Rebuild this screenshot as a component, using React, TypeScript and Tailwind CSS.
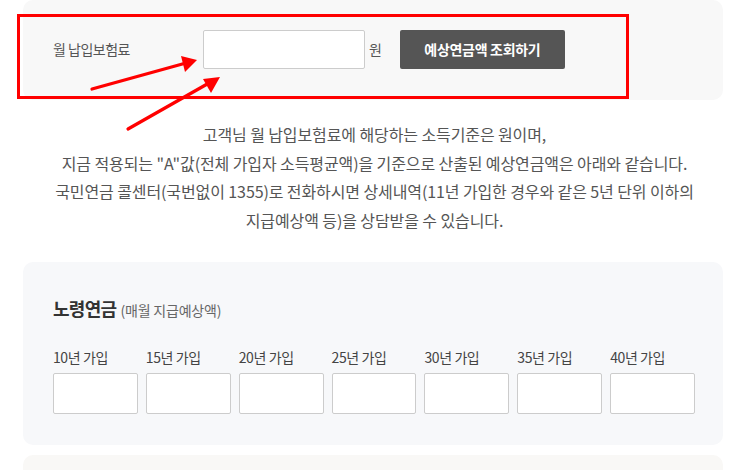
import React from "react";

const years = ["10년 가입", "15년 가입", "20년 가입", "25년 가입", "30년 가입", "35년 가입", "40년 가입"];

export default function App() {
  return (
    <div
      className="relative w-[749px] h-[470px] overflow-hidden bg-white text-[#555]"
      style={{ fontFamily: '"Noto Sans CJK KR", "Noto Sans", sans-serif' }}
    >
      {/* top form panel */}
      <div className="ml-[23px] w-[700px] h-[100px] rounded-[10px] bg-[#f8f8f8] flex items-start pt-[30px] pl-[30px]">
        <span className="w-[150px] h-[39px] flex items-center text-[14px] tracking-[-0.5px] text-[#555]">월 납입보험료</span>
        <div className="w-[162px] h-[39px] bg-white border border-[#cccccc] rounded-[2px]" />
        <span className="ml-[4px] mr-[18px] h-[39px] flex items-center text-[14px] text-[#555]">원</span>
        <button className="w-[165px] h-[39px] bg-[#555555] rounded-[2px] text-white text-[14px] font-bold tracking-[-0.3px]">
          예상연금액 조회하기
        </button>
      </div>

      {/* description */}
      <div className="mt-[20px] text-center text-[16px] leading-[28.67px] tracking-[-0.1px] text-[#555]">
        <p>고객님 월 납입보험료에 해당하는 소득기준은 원이며,</p>
        <p>지금 적용되는 "A"값(전체 가입자 소득평균액)을 기준으로 산출된 예상연금액은 아래와 같습니다.</p>
        <p>국민연금 콜센터(국번없이 1355)로 전화하시면 상세내역(11년 가입한 경우와 같은 5년 단위 이하의</p>
        <p>지급예상액 등)을 상담받을 수 있습니다.</p>
      </div>

      {/* pension panel */}
      <div className="ml-[23px] w-[700px] mt-[27px] rounded-[10px] bg-[#f7f8fa] pl-[30px] pr-[28px] pt-[33px] pb-[31px]">
        <div className="flex items-baseline leading-[26px]">
          <span className="text-[18px] font-bold tracking-[-0.7px] text-[#333]">노령연금</span>
          <span className="ml-[4px] text-[14px] tracking-[-0.2px] text-[#666]">(매월 지급예상액)</span>
        </div>
        <div className="mt-[24px] grid grid-cols-7 gap-x-[8px]">
          {years.map((y) => (
            <div key={y} className="flex flex-col">
              <span className="text-[14px] leading-[20px] tracking-[-0.4px] text-[#444]">{y}</span>
              <div className="mt-[6px] h-[41px] bg-white border border-[#cccccc] rounded-[2px]" />
            </div>
          ))}
        </div>
      </div>

      {/* next panel */}
      <div className="ml-[23px] w-[700px] mt-[10px] h-[60px] rounded-[10px] bg-[#f9f8f6]" />

      {/* annotation overlay */}
      <div className="absolute left-[17px] top-[14px] w-[612px] h-[85px] border-[3px] border-[#ff0000] pointer-events-none" />
      <svg className="absolute inset-0 pointer-events-none" width="749" height="470">
        <line x1="92" y1="89" x2="186" y2="63" stroke="#ff0000" strokeWidth="3.2" strokeLinecap="round" />
        <polygon points="197,60 185,72 181,56" fill="#ff0000" />
        <line x1="128" y1="129" x2="209" y2="83" stroke="#ff0000" strokeWidth="3.2" strokeLinecap="round" />
        <polygon points="220,77 211,93 203,79" fill="#ff0000" />
      </svg>
    </div>
  );
}
